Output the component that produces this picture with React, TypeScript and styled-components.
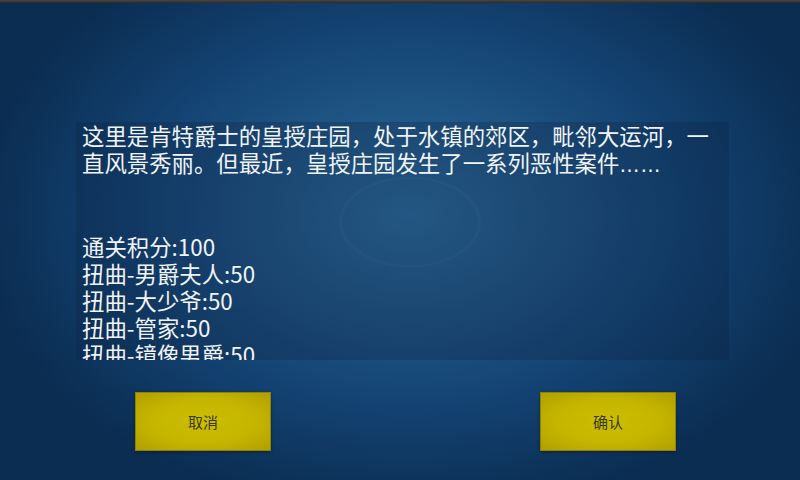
import React from "react";
import styled, { createGlobalStyle } from "styled-components";

const GlobalStyle = createGlobalStyle`
  html, body {
    margin: 0;
    padding: 0;
    background: #0b2746;
  }
`;

const Screen = styled.div`
  width: 800px;
  height: 480px;
  overflow: hidden;
  display: flex;
  flex-direction: column;
  font-family: "Noto Sans CJK SC", "Noto Sans", sans-serif;
  background:
    radial-gradient(ellipse 72px 46px at 410px 222px, transparent 93%, rgba(190, 220, 245, 0.05) 96%, transparent 100%),
    radial-gradient(ellipse 430px 300px at 410px 215px, #2d6b9b 0%, #1f5584 35%, #134271 65%, #0b2d52 100%);
`;

const TopStrip = styled.div`
  height: 3px;
  flex-shrink: 0;
  background: linear-gradient(to bottom, #4c4640, #2c2a2a);
`;

const StoryPanel = styled.div`
  margin: 119px 0 0 76px;
  width: 653px;
  height: 238px;
  box-sizing: border-box;
  padding-left: 6px;
  overflow: hidden;
  background: rgba(10, 30, 62, 0.26);
  color: #f1f4f7;
  font-size: 22.4px;
  line-height: 27px;
`;

const Line = styled.div`
  min-height: 27px;
`;

const Dots = styled.span`
  font-family: "DejaVu Sans", sans-serif;
  font-size: 20px;
  letter-spacing: 1px;
`;

const ButtonRow = styled.div`
  display: flex;
  justify-content: space-between;
  padding: 0 124px 0 135px;
  margin-top: 32px;
`;

const DialogButton = styled.button`
  width: 136px;
  height: 59px;
  border: 1px solid #8f8300;
  box-sizing: border-box;
  background: radial-gradient(ellipse at center, #cbbe00 0%, #c5b500 55%, #b09f00 100%);
  box-shadow: 0 1px 3px rgba(0, 0, 0, 0.35);
  color: #3b3a12;
  font-family: "Noto Sans CJK SC", "Noto Sans", sans-serif;
  font-size: 15px;
  padding: 0;
  cursor: pointer;
`;

const scores = [
  "通关积分:100",
  "扭曲-男爵夫人:50",
  "扭曲-大少爷:50",
  "扭曲-管家:50",
  "扭曲-镜像男爵:50",
];

export default function App() {
  return (
    <>
      <GlobalStyle />
      <Screen>
        <TopStrip />
        <StoryPanel>
          <Line>
            这里是肯特爵士的皇授庄园，处于水镇的郊区，毗邻大运河，一直风景秀丽。但最近，皇授庄园发生了一系列恶性案件
            <Dots>……</Dots>
          </Line>
          <Line />
          <Line />
          {scores.map((s) => (
            <Line key={s}>{s}</Line>
          ))}
        </StoryPanel>
        <ButtonRow>
          <DialogButton>取消</DialogButton>
          <DialogButton>确认</DialogButton>
        </ButtonRow>
      </Screen>
    </>
  );
}
